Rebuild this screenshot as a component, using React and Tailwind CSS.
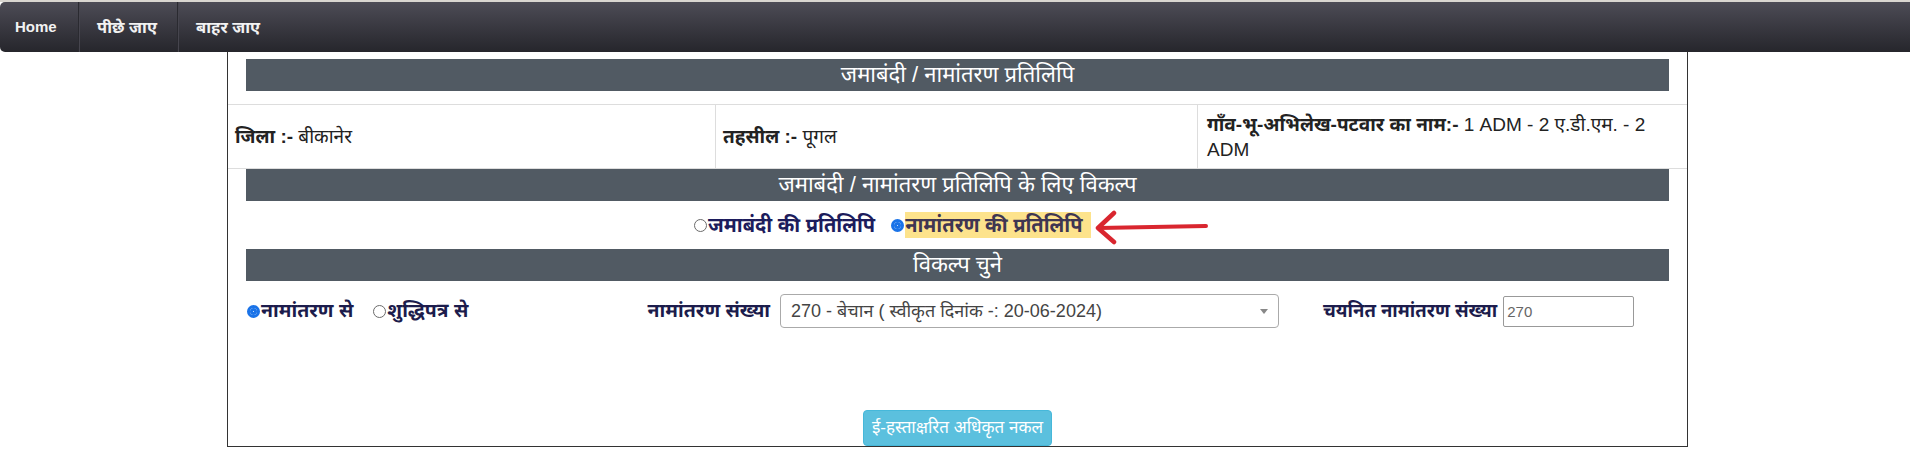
import React from 'react';

function Radio({ checked }) {
    return checked ? (
        <span className="inline-block w-[13px] h-[13px] rounded-full border-[3px] border-[#1a73e8] bg-white shadow-[inset_0_0_0_3px_#1a73e8] mr-[1px] shrink-0" />
    ) : (
        <span className="inline-block w-[13px] h-[13px] rounded-full border border-[#6b6b6b] bg-white mr-[1px] shrink-0" />
    );
}

function Header({ children }) {
    return (
        <div className="mx-[18px] h-[32px] bg-[#515a63] text-white text-center text-[22px] leading-[32px] overflow-hidden">
            {children}
        </div>
    );
}

export default function App() {
    return (
        <div className="min-h-screen bg-white font-['Liberation_Sans','Noto_Sans',sans-serif]">
            {/* top nav */}
            <div className="border-t-2 border-[#d9d6d0]">
                <div className="h-[50px] flex rounded-l-[5px] bg-gradient-to-b from-[#4d4c56] to-[#26262c] text-[#f2f2f2] font-bold text-[15px]">
                    <div className="w-[79px] pl-[15px] flex items-center border-r border-[#2a2a30] shadow-[1px_0_0_#46454e]">Home</div>
                    <div className="w-[99px] pl-[18px] flex items-center text-[16.5px] border-r border-[#2a2a30] shadow-[1px_0_0_#46454e]">पीछे जाए</div>
                    <div className="pl-[18px] flex items-center text-[16.5px]">बाहर जाए</div>
                </div>
            </div>

            {/* main panel */}
            <div className="ml-[227px] w-[1461px] h-[395px] border-x border-b border-[#333] flex flex-col">
                <div className="pt-[7px]">
                    <Header>जमाबंदी / नामांतरण प्रतिलिपि</Header>
                </div>

                <div className="mt-[13px] h-[65px] grid grid-cols-[487px_482px_1fr] border-y border-[#ddd] text-[19px] text-[#222] leading-[25px]">
                    <div className="px-[7px] flex items-center">
                        <span><b>जिला :-</b> बीकानेर</span>
                    </div>
                    <div className="px-[7px] flex items-center border-l border-[#ddd]">
                        <span><b>तहसील :-</b> पूगल</span>
                    </div>
                    <div className="pl-[9px] pr-[30px] flex items-center border-l border-[#ddd]">
                        <span><b>गाँव-भू-अभिलेख-पटवार का नाम:-</b> 1 ADM - 2 ए.डी.एम. - 2 ADM</span>
                    </div>
                </div>

                <Header>जमाबंदी / नामांतरण प्रतिलिपि के लिए विकल्प</Header>

                <div className="relative h-[48px] flex items-center pl-[466px] text-[20px] font-bold text-[#1c1c5c]">
                    <Radio checked={false} />
                    <span>जमाबंदी की प्रतिलिपि</span>
                    <span className="ml-[16px] flex items-center">
                        <Radio checked={true} />
                        <span className="bg-[#fde38c] text-[#3f3652] pr-[8px] leading-[26px]">नामांतरण की प्रतिलिपि</span>
                    </span>
                    <svg className="absolute left-[866px] top-[8px]" width="116" height="36" viewBox="0 0 116 36" fill="none">
                        <path d="M112 17 L5 19" stroke="#d9262f" strokeWidth="4" strokeLinecap="round" />
                        <path d="M20 4 L4 19 L20 33" stroke="#d9262f" strokeWidth="4.5" strokeLinecap="round" strokeLinejoin="round" />
                    </svg>
                </div>

                <Header>विकल्प चुने</Header>

                <div className="mt-[13px] h-[34px] flex items-center px-[19px] text-[19.5px] font-bold text-[#1c1c4c]">
                    <div className="w-[394px] flex items-center">
                        <Radio checked={true} />
                        <span>नामांतरण से</span>
                        <span className="ml-[20px] flex items-center">
                            <Radio checked={false} />
                            <span>शुद्धिपत्र से</span>
                        </span>
                    </div>
                    <div className="w-[638px] flex items-center justify-end gap-[10px]">
                        <span>नामांतरण संख्या</span>
                        <div className="w-[499px] h-[34px] border border-[#aaa] rounded-[4px] flex items-center justify-between pl-[10px] pr-[10px] text-[18px] font-normal text-[#444]">
                            <span>270 - बेचान ( स्वीकृत दिनांक -: 20-06-2024)</span>
                            <span className="w-0 h-0 border-x-[4px] border-x-transparent border-t-[5px] border-t-[#888]" />
                        </div>
                    </div>
                    <div className="ml-[44px] flex items-center gap-[6px]">
                        <span className="text-[18.5px]">चयनित नामांतरण संख्या</span>
                        <input
                            readOnly
                            value="270"
                            className="w-[131px] h-[31px] border border-[#999] rounded-[2px] pl-[3px] text-[15px] font-normal text-[#666] outline-none"
                        />
                    </div>
                </div>

                <div className="mt-auto flex justify-center">
                    <button className="w-[189px] h-[36px] bg-[#5bc0de] text-white text-[17px] rounded-[4px] border border-[#46b8da]">
                        ई-हस्ताक्षरित अधिकृत नकल
                    </button>
                </div>
            </div>
        </div>
    );
}
